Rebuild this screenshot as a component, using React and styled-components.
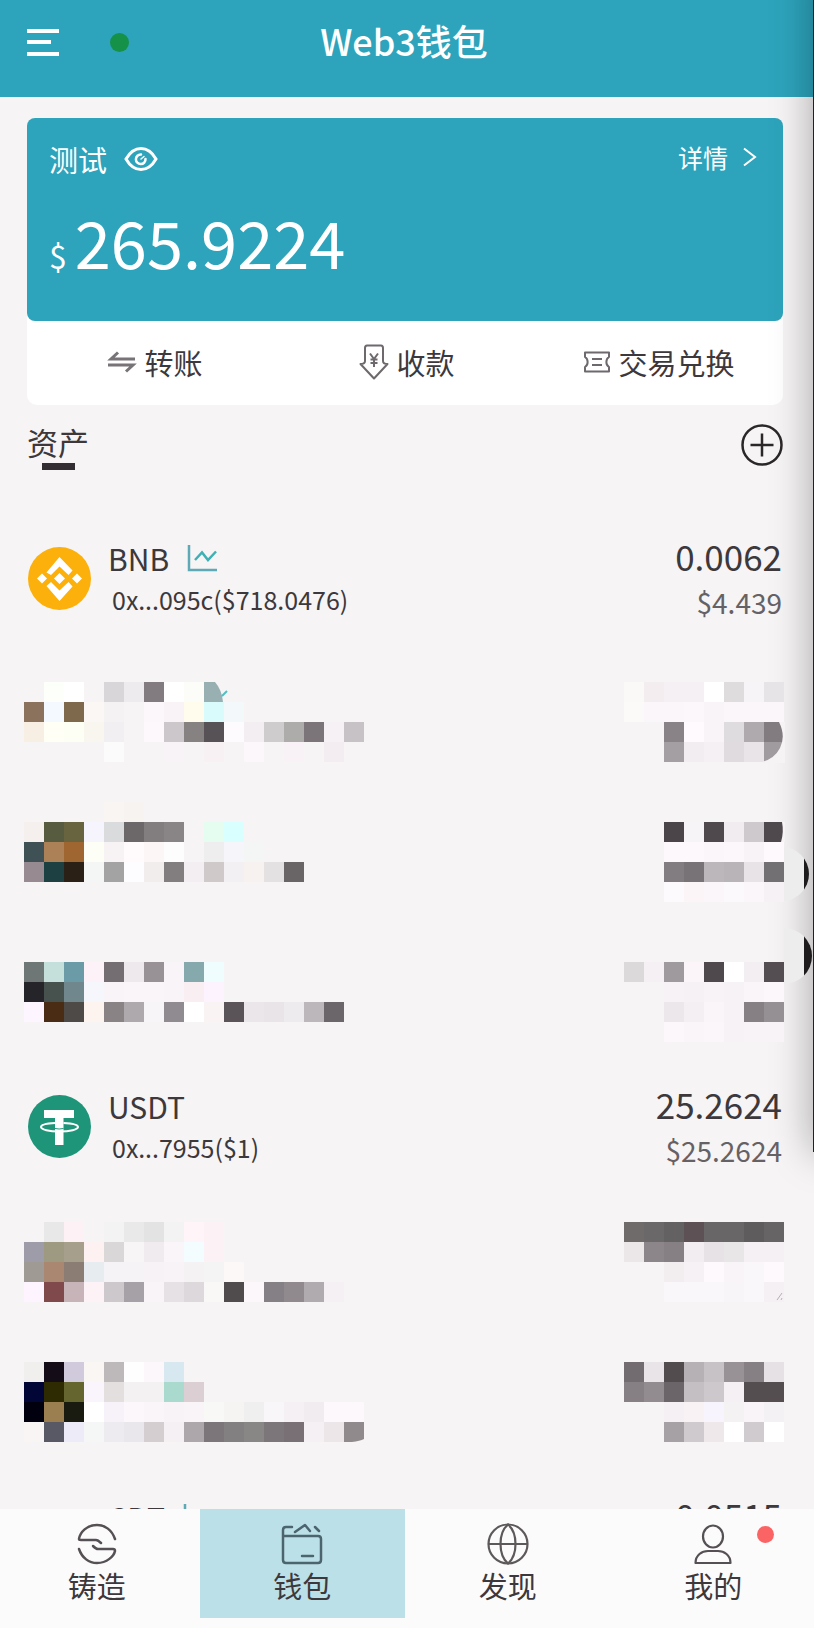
import React from "react";
import styled, { createGlobalStyle } from "styled-components";

const GlobalStyle = createGlobalStyle`
  *, *::before, *::after { box-sizing: border-box; }
  html, body { margin: 0; background: #f6f4f5; }
  body, button {
    font-family: "Noto Sans CJK SC", "Noto Sans", sans-serif;
    color: #3c383b;
  }
  button {
    border: 0;
    padding: 0;
    background: none;
    cursor: pointer;
  }
  svg { display: block; flex: none; }
`;

const Screen = styled.div`
  position: relative;
  display: flex;
  flex-direction: column;
  height: 100vh;
  overflow: hidden;
`;

const DeviceEdge = styled.div`
  position: absolute;
  z-index: 1;
  top: -40px;
  right: -39px;
  width: 40px;
  height: 1192px;
  background: #232021;
  box-shadow: 0 0 40px rgba(0, 0, 0, 0.34);
  pointer-events: none;
`;

const Header = styled.header`
  display: grid;
  grid-template-columns: 1fr auto 1fr;
  align-items: center;
  flex: none;
  height: 97px;
  padding: 0 32px 13px 26px;
  background: #2da4bc;
`;

const HeaderStart = styled.div`
  display: flex;
  align-items: center;
  gap: 50px;
`;

const StatusDot = styled.span`
  width: 19px;
  height: 19px;
  border-radius: 50%;
  background: #169148;
`;

const Title = styled.h1`
  margin: 0;
  padding-bottom: 4px;
  color: #fff;
  font-size: 36px;
  font-weight: 500;
  line-height: 40px;
`;

const Content = styled.main`
  flex: 1;
  min-height: 0;
  overflow-y: auto;
  scrollbar-width: none;
`;

const Card = styled.section`
  margin: 21px 31px 0 27px;
  border-radius: 10px;
  background: #fff;
`;

const Balance = styled.div`
  height: 203px;
  padding: 21px 26px 0 22px;
  border-radius: 8px;
  background: #2da4bc;
  color: #fff;
`;

const BalanceTop = styled.div`
  display: flex;
  align-items: flex-start;
  justify-content: space-between;
`;

const AccountName = styled.div`
  display: flex;
  align-items: center;
  gap: 17px;
  font-size: 29px;
  line-height: 40px;
`;

const IconButton = styled.button`
  display: block;
`;

const DetailLink = styled.a`
  display: flex;
  align-items: center;
  gap: 15px;
  color: #fff;
  font-size: 25px;
  line-height: 36px;
  text-decoration: none;
`;

const Total = styled.p`
  display: flex;
  align-items: baseline;
  gap: 8px;
  margin: 22px 0 0;
  font-size: 65px;
  line-height: 80px;
`;

const Currency = styled.span`
  font-size: 32px;
`;

const Actions = styled.div`
  display: grid;
  grid-template-columns: repeat(3, 1fr);
  height: 84px;
`;

const Action = styled.button`
  display: flex;
  align-items: center;
  justify-content: center;
  gap: 7px;
  padding: 0 0 2px 4px;
  font-size: 29px;
  line-height: 40px;
`;

const AssetsHeader = styled.div`
  display: flex;
  align-items: flex-start;
  justify-content: space-between;
  height: 105px;
  padding: 19px 31px 0 27px;
`;

const AssetsTitle = styled.h2`
  display: flex;
  flex-direction: column;
  align-items: center;
  gap: 4px;
  margin: 0;
  font-size: 31px;
  font-weight: 400;
  line-height: 35px;

  &::after {
    content: "";
    width: 33px;
    height: 7px;
    background: #332e31;
  }
`;

const AssetList = styled.ul`
  margin: 0;
  padding: 0 30px 0 24px;
  list-style: none;
`;

const AssetRow = styled.li`
  display: flex;
  height: 137px;
  padding-top: ${(p) => p.$top || 28}px;
  justify-content: space-between;
`;

const Asset = styled.div`
  display: flex;
  gap: 14px;
`;

const CoinSlot = styled.div`
  display: flex;
  justify-content: center;
  width: 70px;
  padding-top: 9px;
`;

const AssetName = styled.div`
  display: flex;
  align-items: center;
  gap: 18px;
  font-size: 30px;
  line-height: 40px;
`;

const Contract = styled.div`
  padding-left: 4px;
  font-size: 25px;
  line-height: 42px;
`;

const Amounts = styled.div`
  display: flex;
  flex-direction: column;
  gap: 10px;
  padding-right: 2px;
  text-align: right;
`;

const Amount = styled.div`
  font-size: 35px;
  line-height: 36px;
`;

const Value = styled.div`
  color: #666164;
  font-size: 28px;
  line-height: 36px;
`;

const MosaicSvg = styled.svg`
  position: relative;
  z-index: 2;
  overflow: visible;
`;

const TabBar = styled.nav`
  display: grid;
  grid-template-columns: repeat(4, 1fr);
  flex: none;
  margin: 0 -2px 0 -6px;
  padding-bottom: 10px;
  background: #fcfbfc;
`;

const Tab = styled.button`
  position: relative;
  display: flex;
  flex-direction: column;
  align-items: center;
  height: 109px;
  padding-top: 14px;
  background: ${(p) => (p.$active ? "#bce0e7" : "transparent")};
  font-size: 29px;
  line-height: 40px;
`;

const Badge = styled.span`
  position: absolute;
  top: 17px;
  left: calc(50% + 44px);
  width: 17px;
  height: 17px;
  border-radius: 50%;
  background: #fb6464;
`;

const CELL = 20;

function Mosaic({ rows, cols, children }) {
  const width = cols * CELL;
  const height = rows.length * CELL;
  return (
    <MosaicSvg width={width} height={height} shapeRendering="crispEdges" aria-hidden="true">
      {rows.map((row, y) =>
        row.split(" ").map((color, x) =>
          color === "-" ? null : (
            <rect key={`${x}-${y}`} x={x * CELL} y={y * CELL} width={CELL} height={CELL} fill={`#${color}`} />
          )
        )
      )}
      <g shapeRendering="auto">{children}</g>
    </MosaicSvg>
  );
}

function EdgeDisc({ id, cx, cy, r }) {
  return (
    <g>
      <clipPath id={id}>
        <circle cx={cx} cy={cy} r={r} />
      </clipPath>
      <g clipPath={`url(#${id})`}>
        <rect x="160" y={cy - r} width="20" height={r * 2} fill="#eeedee" />
        <rect x="180" y={cy - r} width="12" height={r * 2} fill="#1f1c1d" />
      </g>
    </g>
  );
}

function MenuIcon() {
  return (
    <svg width="34" height="30" fill="none" stroke="#fff" strokeWidth="4">
      <path d="M1 4H33M1 15H25M1 27H33" />
    </svg>
  );
}

function EyeIcon() {
  return (
    <svg width="34" height="26" fill="none" stroke="#fff" strokeWidth="3" strokeLinecap="round">
      <path d="M2 13C6 6 11 2.500 17 2.500S28 6 32 13C28 20 23 23.500 17 23.500S6 20 2 13Z" />
      <path d="M17 8.500A4.800 4.800 0 1 0 21.500 13" strokeWidth="2.500" />
      <path d="M17 13L20 10.500" strokeWidth="1.500" />
    </svg>
  );
}

function ChevronIcon() {
  return (
    <svg width="14" height="20" fill="none" stroke="#fff" strokeWidth="2">
      <path d="M1 1.500L12 10L1 18.500" />
    </svg>
  );
}

function TransferIcon() {
  return (
    <svg width="30" height="22" fill="none" stroke="#777376" strokeWidth="3">
      <path d="M28 8H4L11 1.500" />
      <path d="M1 14H26L19 20.500" />
    </svg>
  );
}

function ReceiveIcon() {
  return (
    <svg width="30" height="36" fill="none" stroke="#6d696c" strokeWidth="2" strokeLinejoin="round">
      <path d="M8 1.500H22Q24 1.500 24 4V17C24 19 25 20 28.500 20L15 34.500L1.500 20C5 20 6 19 6 17V4Q6 1.500 8 1.500Z" />
      <path d="M11 9.500L15 15L19 9.500M15 15V23M11.500 15.500H18.500M11.500 19H18.500" />
    </svg>
  );
}

function SwapIcon() {
  return (
    <svg width="28" height="22" fill="none" stroke="#6d696c" strokeWidth="2" strokeLinejoin="round">
      <path d="M2 1.500H26V6C22.500 8 22.500 14 26 16V20.500H2V16C5.500 14 5.500 8 2 6Z" />
      <path d="M9 8H19M9 14H19" />
    </svg>
  );
}

function AddIcon() {
  return (
    <svg width="42" height="42" fill="none" stroke="#2b2729" strokeWidth="2.500">
      <circle cx="21" cy="21" r="19.500" />
      <path d="M9.500 21H32.500M21 9.500V32.500" />
    </svg>
  );
}

function ChartIcon() {
  return (
    <svg width="31" height="28" fill="none" strokeWidth="2.500">
      <path d="M2 1V26H30" stroke="#5da9b6" />
      <path d="M8 16L15 8.500L21 16L29 7.500" stroke="#3fb0b4" />
    </svg>
  );
}

function BnbIcon() {
  return (
    <svg width="63" height="63" fill="#fff">
      <circle cx="31.500" cy="31.500" r="31.500" fill="#fbb00c" />
      <path d="M18.500 25.500L31.500 10L44.500 23.500L40.500 28L31.500 19.500L23 28Z" />
      <path d="M18.500 39L23 35L31.500 43.500L40.500 35L44.500 39.500L31.500 54Z" />
      <path d="M31.500 26L37 31.500L31.500 37L26 31.500Z" />
      <path d="M9 31.500L14 26.500L19 31.500L14 36.500Z" />
      <path d="M44 31.500L49 26.500L54 31.500L49 36.500Z" />
    </svg>
  );
}

function UsdtIcon() {
  return (
    <svg width="63" height="63" fill="none">
      <circle cx="31.500" cy="31.500" r="31.500" fill="#1e9579" />
      <path d="M16 15H46V23H35.500V50H27V23H16Z" fill="#fff" />
      <path d="M27 28C18 28.500 13 30 13 32C13 34.500 21 36.500 31.500 36.500S50 34.500 50 32C50 30 45 28.500 35.500 28" stroke="#fff" strokeWidth="2" />
      <path d="M27 33.500Q31 34.500 35.500 33.500" stroke="#1e9579" />
    </svg>
  );
}

function MintIcon() {
  return (
    <svg width="42" height="42" fill="none" stroke="#555053" strokeWidth="2.500" strokeLinecap="round" strokeLinejoin="round">
      <path d="M39 16C36 7 29 2 21 2C11 2 4 9 3 16Q3 17 5 17H20Q22 17 25 20" />
      <path d="M3 26C6 35 13 40 21 40C31 40 38 33 39 28Q39 26 37 26H22Q20 26 17 23" />
    </svg>
  );
}

function WalletIcon() {
  return (
    <svg width="42" height="42" fill="none" stroke="#4b646e" strokeWidth="2.500" strokeLinecap="round" strokeLinejoin="round">
      <path d="M2 13V7Q2 4 5 4H11M2 13H37Q40 13 40 16V37Q40 40 37 40H5Q2 40 2 37Z" />
      <path d="M14 9L24 2L29 8M34 4L38 8" />
      <path d="M21 33H32" />
    </svg>
  );
}

function GlobeIcon() {
  return (
    <svg width="42" height="42" fill="none" stroke="#5d595b" strokeWidth="2.200">
      <circle cx="21" cy="21" r="19.500" />
      <path d="M1.500 21H40.500M21 1.500C11 10 11 32 21 40.500C31 32 31 10 21 1.500Z" />
    </svg>
  );
}

function ProfileIcon() {
  return (
    <svg width="42" height="42" fill="none" stroke="#555053" strokeWidth="2.200" strokeLinejoin="round">
      <ellipse cx="21" cy="13.500" rx="10" ry="11" />
      <path d="M3.500 40C3.500 32 10 28 16 28H26C32 28 38.500 32 38.500 40Z" />
    </svg>
  );
}

function VisibleAsset({ icon, name, contract, amount, value, chart }) {
  return (
    <AssetRow>
      <Asset>
        <CoinSlot>{icon}</CoinSlot>
        <div>
          <AssetName>
            {name}
            {chart && <ChartIcon />}
          </AssetName>
          <Contract>{contract}</Contract>
        </div>
      </Asset>
      <Amounts>
        <Amount>{amount}</Amount>
        <Value>{value}</Value>
      </Amounts>
    </AssetRow>
  );
}

const HIDDEN = [
  {
    top: 35,
    left: [
      "- fdfffb ffffff - d9d6d9 eeebee 827b80 ffffff fcfdf8 98b0b2",
      "8a725d f4f9ff 7f694d faf7f5 f4f2f3 - fbf7fa f9f3f7 fffcee d9fbfc f3f8fb",
      "f8efe4 fffff6 fdfff4 f8f6ef f1eff1 - fcf8fb cbc7ca 868282 575256 fefbfe f3eef1 cfcccd aeabab 7b757a f5f1f4 c6c2c6",
      "- - - - fcfbfc - - f8f3f6 - f8f1f4 - fcf7fb - f8f2f6 - f3edf1",
    ],
    leftExtra: (
      <>
        <path d="M191 0H201V20H199Q198 8 191 0Z" fill="#f6f4f5" />
        <path d="M198 14L203 9" stroke="#4dbfc6" strokeWidth="2" />
      </>
    ),
    right: [
      "fbf8f8 f3edf0 f4f0f3 f4f0f3 ffffff dfdcde f7f4f7 e7e4e7",
      "fcf9f9 faf6f9 faf6f9 fbf7fa f8f4f7 faf6f9 faf6f9 faf6f9",
      "- - 898388 fefafe f8f4f7 dfdcdf afaaad 827c80",
      "- - a49fa3 f1edf0 f4f0f4 dfdbde e8e4e7 a09b9f",
    ],
    rightExtra: (
      <path d="M155 40H161V81H134Q150 78 156 66Q162 54 155 40Z" fill="#f5f3f4" />
    ),
  },
  {
    top: 18,
    left: [
      "- - - - f8f5f2 f7f3f0",
      "f5f0ed 575b40 68643f f6f4fc d9dbdd 6c6869 827d7f 898586 - e5fdf0 d9ffff",
      "3f5155 ad8157 a06632 fdfff7 f7f3f4 fffbfc fdf6f7 fefdfe - eeeeee f6f5fa f3f6f4",
      "978a90 1d4043 2b2015 f4f6f5 a4a3a3 fdfdff f0edec 827d7f f3eef1 cfcac9 f2f0f3 f7f1ef e4e1e2 696465",
    ],
    right: [
      "-",
      "- - 4b4549 f7f4f7 4f494d f1ecef cdc9cc 4f494d",
      "- - fcf8fb fcf8fb faf6f9 fbf7fa f7f3f6 fdf9fd",
      "- - 827d80 787377 bbb7ba b9b4b7 e7e3e6 737074",
      "- - fdfafd fbf5f8 faf6f9 fcf9fc faf6f9 f5f1f4",
    ],
    rightExtra: (
      <>
        <path d="M158 20H161V40H157Q160 30 158 20Z" fill="#f5f3f4" />
        <EdgeDisc id="disc-upper" cx={158} cy={72} r={27} />
      </>
    ),
  },
  {
    top: 41,
    left: [
      "6f7776 c5e0da 6b9ba6 fdf2f8 746d71 eee9ed 989195 f8f4f8 85a9ac f0fdff",
      "252428 47514d 70878e f6f7fc f9f4f7 f9f5f9 f9f5f9 f8f4f7 f9eef1 fdf3ff",
      "fdf5ff 4a2c15 4d4a48 fdf3ef 898386 aea9ac f8f5f8 908b90 ffffff f9f4f3 5a5458 eae6e9 e8e4e7 eeebee bcb7bb 6b666a",
    ],
    right: [
      "dbd9da f5f0f4 9f9a9d fbf5f9 4f494d ffffff f2eef1 544e52",
      "- - f7f2f5 f6f1f4 f7f3f6 f6f2f5 f9f5f8 fcf7fb",
      "- - ebe7ea f3eff2 faf5f9 f6f2f5 868084 959094",
      "- - fbf7fa f9f5f8 faf6f9 f6f2f5 f7f3f6 f7f3f6",
    ],
    rightExtra: <EdgeDisc id="disc-lower" cx={160} cy={-6} r={28} />,
  },
  {
    top: 27,
    left: [
      "- e9e8e8 fdf1f6 - f4f3f4 eae9ea e4e3e4 f4f3f4 fff4f7 fcf2f5",
      "9d9ca8 9e9981 a69f8b fdf1f2 dad7d8 f7f5f6 f0ebee f9f5f9 f3fdff fcf2f5",
      "9f9b94 a98771 8b7d73 e7ecf1 f6f3f6 f6f3f6 f6f2f5 f7f3f6 f4f2f3 f5f4f4 fcf8f8",
      "fdf4ff 804a4d c6b4b8 fdf2f5 cdc8cc a6a1a6 f9f4f8 e5e1e5 dcd8db faf7f7 504b4c fbf7fa 858085 908a8e b0abaf f5f0f4",
    ],
    right: [
      "6f6b6b 6a6868 636161 5e5155 686666 686666 5e5c5c 666464",
      "ebe7e9 8c868b 868084 f2edf0 e6e2e5 e9e6e8 f4f0f3 f4f0f3",
      "- - f2eef0 f5f1f4 fdf9fc f8f4f7 faf7fa fdf9fd",
      "- - faf7fb faf7fb faf7fb f8f5f8 faf7fb f4f0f3",
    ],
    rightExtra: <path d="M153 78L158 71M157 78L158 76" stroke="#b5b0b2" />,
  },
  {
    top: 30,
    left: [
      "f1eeee 140c17 d1cadd faf6f4 bdb9ba fefefe fcf7fb d8e8f1",
      "010637 2e2b03 65652f faf5fc e2dfde f4f1f2 f4f1f2 aadace dccfd4",
      "00000f 9b7f50 191a10 ffffff f7f1fa fcf7fb f9f5f8 f7f3f6 f8f4f7 f8f9f7 f5f4f3 f0efef f9f6fa f4f0f4 f1ecf0 fcf8fc fcf8fc",
      "faf5f5 595966 eeebf8 f4f7f6 eeebf0 eae7ec d4ced1 f5f0f4 ada7ab 7c757a 828080 898786 7c757a 787075 f5f0f4 ece6e9 908a8d",
    ],
    leftExtra: <path d="M328 80Q336 79 340 77V81H328Z" fill="#f6f4f5" />,
    right: [
      "726c70 e8e4e7 524c4f b6b1b4 c6c2c5 989195 868084 e5e1e4",
      "868084 928c90 6b6468 c4bfc2 cdc8cb f4f0f3 544e51 544e51",
      "- - f4f0f3 f8f2f5 f8f4fd f5f2f4 f9f4f7 f4f1f4",
      "- - a6a1a5 cfcacd eee8eb ffffff cfcbce ffffff",
    ],
  },
];

function HiddenAsset({ top, left, leftExtra, right, rightExtra }) {
  return (
    <AssetRow $top={top}>
      <Mosaic rows={left} cols={17}>{leftExtra}</Mosaic>
      <Mosaic rows={right} cols={8}>{rightExtra}</Mosaic>
    </AssetRow>
  );
}

const TABS = [
  { label: "铸造", Icon: MintIcon },
  { label: "钱包", Icon: WalletIcon, active: true },
  { label: "发现", Icon: GlobeIcon },
  { label: "我的", Icon: ProfileIcon, badge: true },
];

export default function App() {
  return (
    <Screen>
      <GlobalStyle />
      <Header>
        <HeaderStart>
          <IconButton type="button" aria-label="菜单">
            <MenuIcon />
          </IconButton>
          <StatusDot />
        </HeaderStart>
        <Title>Web3钱包</Title>
      </Header>

      <Content>
        <Card>
          <Balance>
            <BalanceTop>
              <AccountName>
                测试
                <IconButton type="button" aria-label="显示余额">
                  <EyeIcon />
                </IconButton>
              </AccountName>
              <DetailLink href="#detail">
                详情
                <ChevronIcon />
              </DetailLink>
            </BalanceTop>
            <Total>
              <Currency>$</Currency>
              265.9224
            </Total>
          </Balance>
          <Actions>
            <Action type="button"><TransferIcon />转账</Action>
            <Action type="button"><ReceiveIcon />收款</Action>
            <Action type="button"><SwapIcon />交易兑换</Action>
          </Actions>
        </Card>

        <AssetsHeader>
          <AssetsTitle>资产</AssetsTitle>
          <IconButton type="button" aria-label="添加资产">
            <AddIcon />
          </IconButton>
        </AssetsHeader>

        <AssetList>
          <VisibleAsset
            icon={<BnbIcon />}
            name="BNB"
            contract="0x...095c($718.0476)"
            amount="0.0062"
            value="$4.439"
            chart
          />
          {HIDDEN.slice(0, 3).map((row) => (
            <HiddenAsset key={row.top} {...row} />
          ))}
          <VisibleAsset
            icon={<UsdtIcon />}
            name="USDT"
            contract="0x...7955($1)"
            amount="25.2624"
            value="$25.2624"
          />
          {HIDDEN.slice(3).map((row) => (
            <HiddenAsset key={row.top} {...row} />
          ))}
          <VisibleAsset name="CDT" amount="0.0515" chart />
        </AssetList>
      </Content>

      <TabBar>
        {TABS.map(({ label, Icon, active, badge }) => (
          <Tab key={label} type="button" $active={active} aria-current={active ? "page" : undefined}>
            <Icon />
            {label}
            {badge && <Badge />}
          </Tab>
        ))}
      </TabBar>
      <DeviceEdge />
    </Screen>
  );
}
